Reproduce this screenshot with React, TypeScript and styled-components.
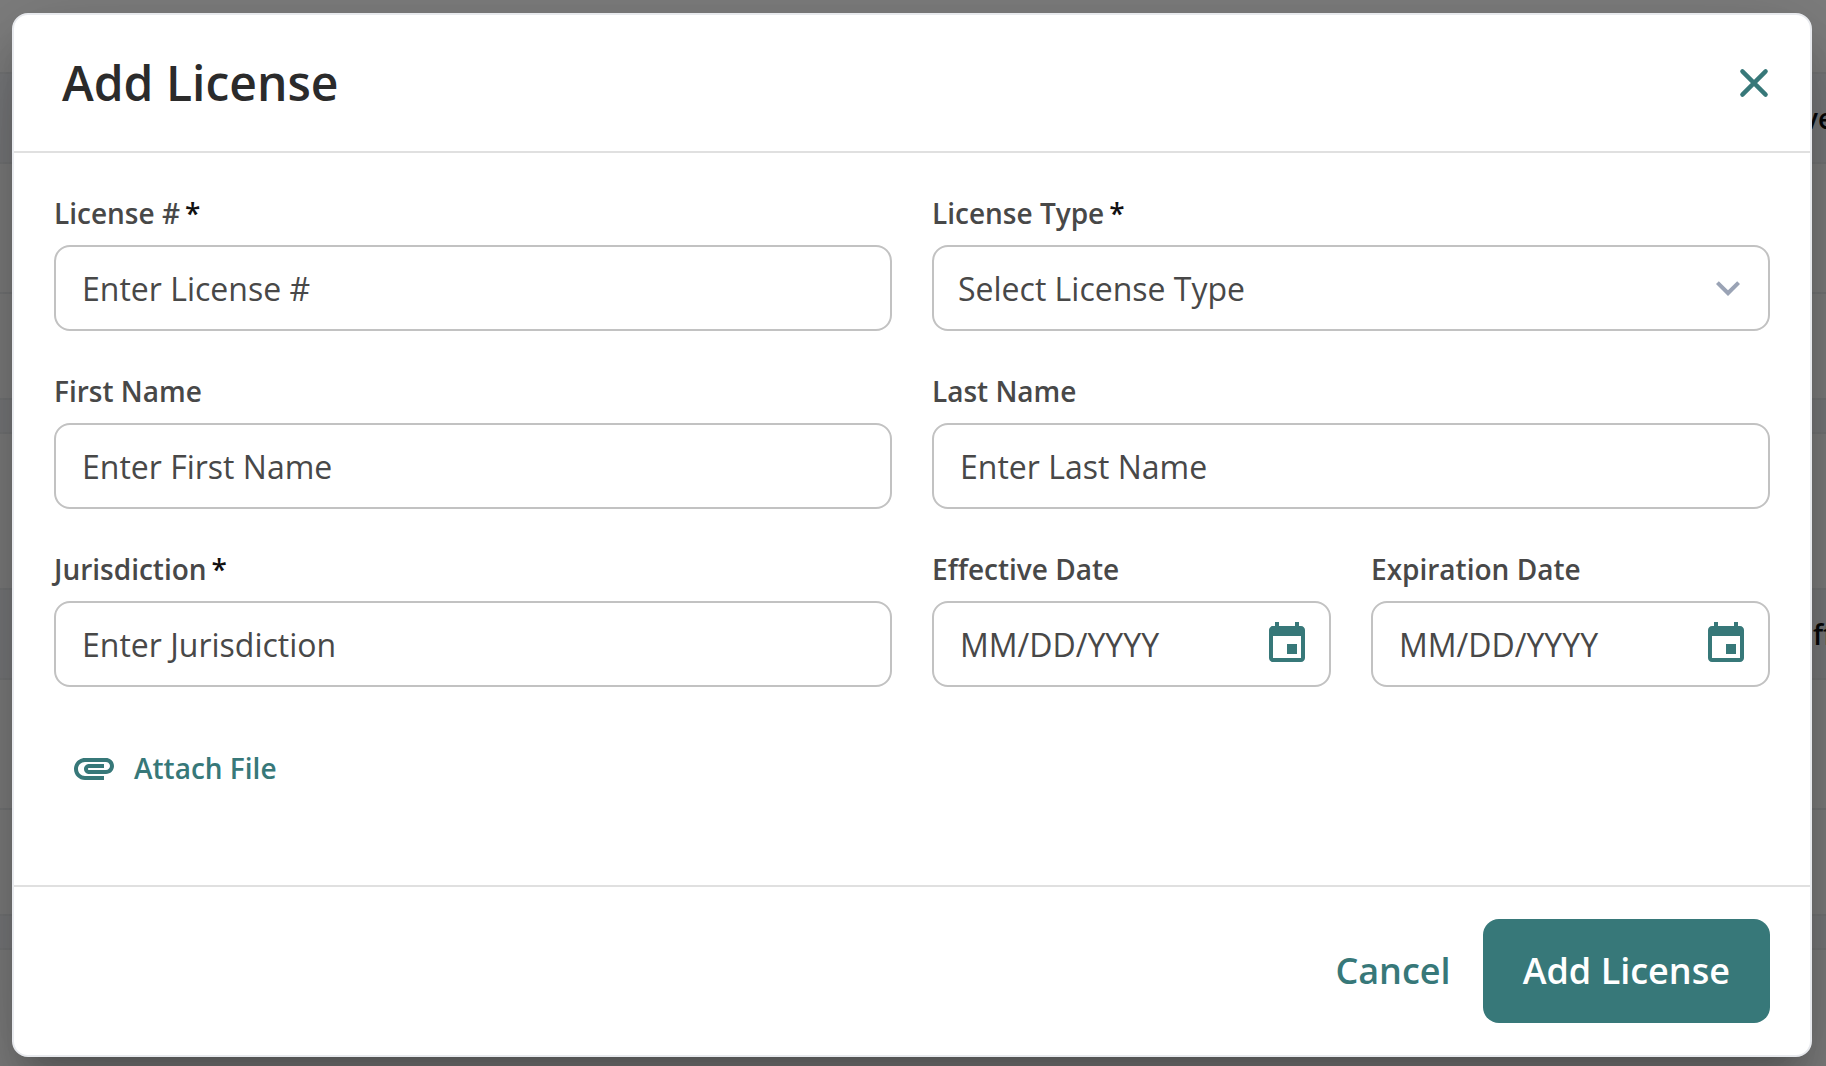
import React, { useId } from "react";
import styled, { createGlobalStyle } from "styled-components";

const color = {
  teal: "#377879",
  title: "#2b2b2b",
  text: "#484848",
  field: "#c2c2c2",
  divider: "#e0e0e0",
  edge: "#e8eaee",
  chevron: "#9aa3b5",
};

const GlobalStyle = createGlobalStyle`
  *, *::before, *::after { box-sizing: border-box; }
  body {
    margin: 0;
    font-family: "Open Sans", "Noto Sans", sans-serif;
    color: ${color.text};
    overflow: hidden;
  }
  button, input, select { font: inherit; color: inherit; margin: 0; }
`;

const Page = styled.div`
  position: relative;
  min-height: 100vh;
  display: grid;
`;

const Backdrop = styled.div`
  grid-area: 1 / 1;
  display: flex;
  flex-direction: column;
  overflow: hidden;
  background: #fdfdfc;
`;

const BackdropRow = styled.div<{ $height: number; $band?: boolean }>`
  display: flex;
  align-items: center;
  justify-content: flex-end;
  height: ${(p) => p.$height}px;
  border-bottom: 2px solid #ebecee;
  background: ${(p) => (p.$band ? "#f2f5f8" : "transparent")};
  color: #111;
  font-size: 28px;
  font-weight: 600;
  line-height: 40px;
`;

const ClippedText = styled.span<{ $width: number }>`
  width: ${(p) => p.$width}px;
  white-space: nowrap;
`;

const Scrim = styled.div`
  grid-area: 1 / 1;
  z-index: 1;
  display: flex;
  overflow: hidden;
  padding: 13px 14px 9px 12px;
  background: rgba(0, 0, 0, 0.5);
`;

const Dialog = styled.form`
  flex: 1;
  display: flex;
  flex-direction: column;
  border: 2px solid ${color.edge};
  border-radius: 16px;
  background: #fff;
  box-shadow:
    0 22px 30px -14px rgba(0, 0, 0, 0.2),
    0 48px 76px 6px rgba(0, 0, 0, 0.14),
    0 18px 92px 16px rgba(0, 0, 0, 0.12);
`;

const Header = styled.header`
  display: flex;
  align-items: center;
  justify-content: space-between;
  padding: 36px 32px 36px 48px;
  border-bottom: 2px solid ${color.divider};
`;

const Title = styled.h1`
  margin: 0;
  color: ${color.title};
  font-size: 48px;
  font-weight: 600;
  line-height: 64px;
`;

const IconButton = styled.button`
  display: flex;
  padding: 0;
  border: 0;
  background: none;
  color: ${color.teal};
  cursor: pointer;
`;

const Icon = styled.svg`
  flex: none;
  width: 48px;
  height: 48px;
`;

const Body = styled.div`
  flex: 1;
  display: flex;
  flex-direction: column;
  align-items: stretch;
  gap: 41px;
  padding: 40px;
`;

const Columns = styled.div`
  display: grid;
  grid-template-columns: repeat(2, minmax(0, 1fr));
  gap: 40px;
`;

const FieldGroup = styled.div`
  display: flex;
  flex-direction: column;
  gap: 12px;
`;

const Label = styled.label`
  font-size: 28px;
  font-weight: 600;
  line-height: 40px;
`;

const Required = styled.span`
  margin-left: 5px;
  color: #111;
`;

const Box = styled.div`
  display: flex;
  align-items: center;
  height: 86px;
  border: 2px solid ${color.field};
  border-radius: 16px;
  background: #fff;
`;

const Input = styled.input`
  flex: 1;
  min-width: 0;
  height: 100%;
  padding: 0 26px;
  border: 0;
  outline: 0;
  background: none;
  font-size: 32px;
  &::placeholder {
    color: ${color.text};
    opacity: 1;
  }
`;

const SelectBox = styled(Box)`
  display: grid;
  align-items: stretch;
`;

const Select = styled.select`
  grid-area: 1 / 1;
  min-width: 0;
  padding: 0 72px 0 24px;
  border: 0;
  outline: 0;
  appearance: none;
  background: none;
  font-size: 32px;
`;

const SelectIcon = styled(Icon)`
  grid-area: 1 / 1;
  align-self: center;
  justify-self: end;
  margin-right: 16px;
  color: ${color.chevron};
  pointer-events: none;
`;

const DateButton = styled(IconButton)`
  margin-right: 18px;
`;

const AttachButton = styled.button`
  align-self: flex-start;
  display: flex;
  align-items: center;
  gap: 16px;
  padding: 16px;
  border: 0;
  background: none;
  color: ${color.teal};
  font-size: 28px;
  font-weight: 600;
  line-height: 48px;
  cursor: pointer;
`;

const Footer = styled.footer`
  display: flex;
  align-items: center;
  justify-content: flex-end;
  padding: 32px 40px;
  border-top: 2px solid ${color.divider};
`;

const FooterButton = styled.button<{ $primary?: boolean }>`
  padding: 28px ${(p) => (p.$primary ? 40 : 32)}px;
  border: 0;
  border-radius: 16px;
  background: ${(p) => (p.$primary ? color.teal : "none")};
  color: ${(p) => (p.$primary ? "#fff" : color.teal)};
  font-size: 36px;
  font-weight: 600;
  line-height: 48px;
  cursor: pointer;
`;

type FieldProps = { label: string; required?: boolean };

function FieldLabel({ id, label, required }: FieldProps & { id: string }) {
  return (
    <Label htmlFor={id}>
      {label}
      {required && <Required>*</Required>}
    </Label>
  );
}

function TextField({ label, required, placeholder }: FieldProps & { placeholder: string }) {
  const id = useId();
  return (
    <FieldGroup>
      <FieldLabel id={id} label={label} required={required} />
      <Box>
        <Input id={id} type="text" placeholder={placeholder} />
      </Box>
    </FieldGroup>
  );
}

function SelectField({ label, required, placeholder }: FieldProps & { placeholder: string }) {
  const id = useId();
  return (
    <FieldGroup>
      <FieldLabel id={id} label={label} required={required} />
      <SelectBox>
        <Select id={id} defaultValue="">
          <option value="">{placeholder}</option>
        </Select>
        <SelectIcon viewBox="0 0 24 24" fill="currentColor" aria-hidden="true">
          <path d="M16.59 8.59 12 13.17 7.41 8.59 6 10l6 6 6-6z" />
        </SelectIcon>
      </SelectBox>
    </FieldGroup>
  );
}

function DateField({ label }: FieldProps) {
  const id = useId();
  return (
    <FieldGroup>
      <FieldLabel id={id} label={label} />
      <Box>
        <Input id={id} type="text" placeholder="MM/DD/YYYY" />
        <DateButton type="button" aria-label={label}>
          <Icon viewBox="0 0 24 24" fill="currentColor" aria-hidden="true">
            <path d="M17 12h-5v5h5v-5zM16 1v2H8V1H6v2H5c-1.11 0-1.99.9-1.99 2L3 19c0 1.1.89 2 2 2h14c1.1 0 2-.9 2-2V5c0-1.1-.9-2-2-2h-1V1h-2zm3 18H5V8h14v11z" />
          </Icon>
        </DateButton>
      </Box>
    </FieldGroup>
  );
}

type Row = { height: number; band?: boolean; text?: string; textWidth?: number };

const rows: Row[] = [
  { height: 74 },
  { height: 90, band: true, text: "ve", textWidth: 23 },
  { height: 130 },
  { height: 106 },
  { height: 34, band: true },
  { height: 156 },
  { height: 90, band: true, text: "ff", textWidth: 13 },
  { height: 130 },
  { height: 106 },
  { height: 34, band: true },
];

export default function App() {
  return (
    <>
      <GlobalStyle />
      <Page>
        <Backdrop aria-hidden="true">
          {rows.map((row, i) => (
            <BackdropRow key={i} $height={row.height} $band={row.band}>
              {row.text && <ClippedText $width={row.textWidth ?? 0}>{row.text}</ClippedText>}
            </BackdropRow>
          ))}
        </Backdrop>
        <Scrim>
          <Dialog role="dialog" aria-labelledby="dialog-title" onSubmit={(e) => e.preventDefault()}>
            <Header>
              <Title id="dialog-title">Add License</Title>
              <IconButton type="button" aria-label="Close">
                <Icon viewBox="0 0 48 48" fill="none" stroke="currentColor" strokeWidth="4.4" aria-hidden="true">
                  <path d="M12.4 12.4 35.6 35.6M35.6 12.4 12.4 35.6" strokeLinecap="round" />
                </Icon>
              </IconButton>
            </Header>
            <Body>
              <Columns>
                <TextField label="License #" required placeholder="Enter License #" />
                <SelectField label="License Type" required placeholder="Select License Type" />
                <TextField label="First Name" placeholder="Enter First Name" />
                <TextField label="Last Name" placeholder="Enter Last Name" />
                <TextField label="Jurisdiction" required placeholder="Enter Jurisdiction" />
                <Columns>
                  <DateField label="Effective Date" />
                  <DateField label="Expiration Date" />
                </Columns>
              </Columns>
              <AttachButton type="button">
                <Icon viewBox="0 0 24 24" fill="currentColor" aria-hidden="true">
                  <path d="M2 12.5C2 9.46 4.46 7 7.5 7H18c2.21 0 4 1.79 4 4s-1.79 4-4 4H9.5C8.12 15 7 13.88 7 12.5S8.12 10 9.5 10H17v2H9.41c-.55 0-.55 1 0 1H18c1.1 0 2-.9 2-2s-.9-2-2-2H7.5C5.57 9 4 10.57 4 12.5S5.57 16 7.5 16H17v2H7.5C4.46 18 2 15.54 2 12.5z" />
                </Icon>
                Attach File
              </AttachButton>
            </Body>
            <Footer>
              <FooterButton type="button">Cancel</FooterButton>
              <FooterButton type="submit" $primary>
                Add License
              </FooterButton>
            </Footer>
          </Dialog>
        </Scrim>
      </Page>
    </>
  );
}
